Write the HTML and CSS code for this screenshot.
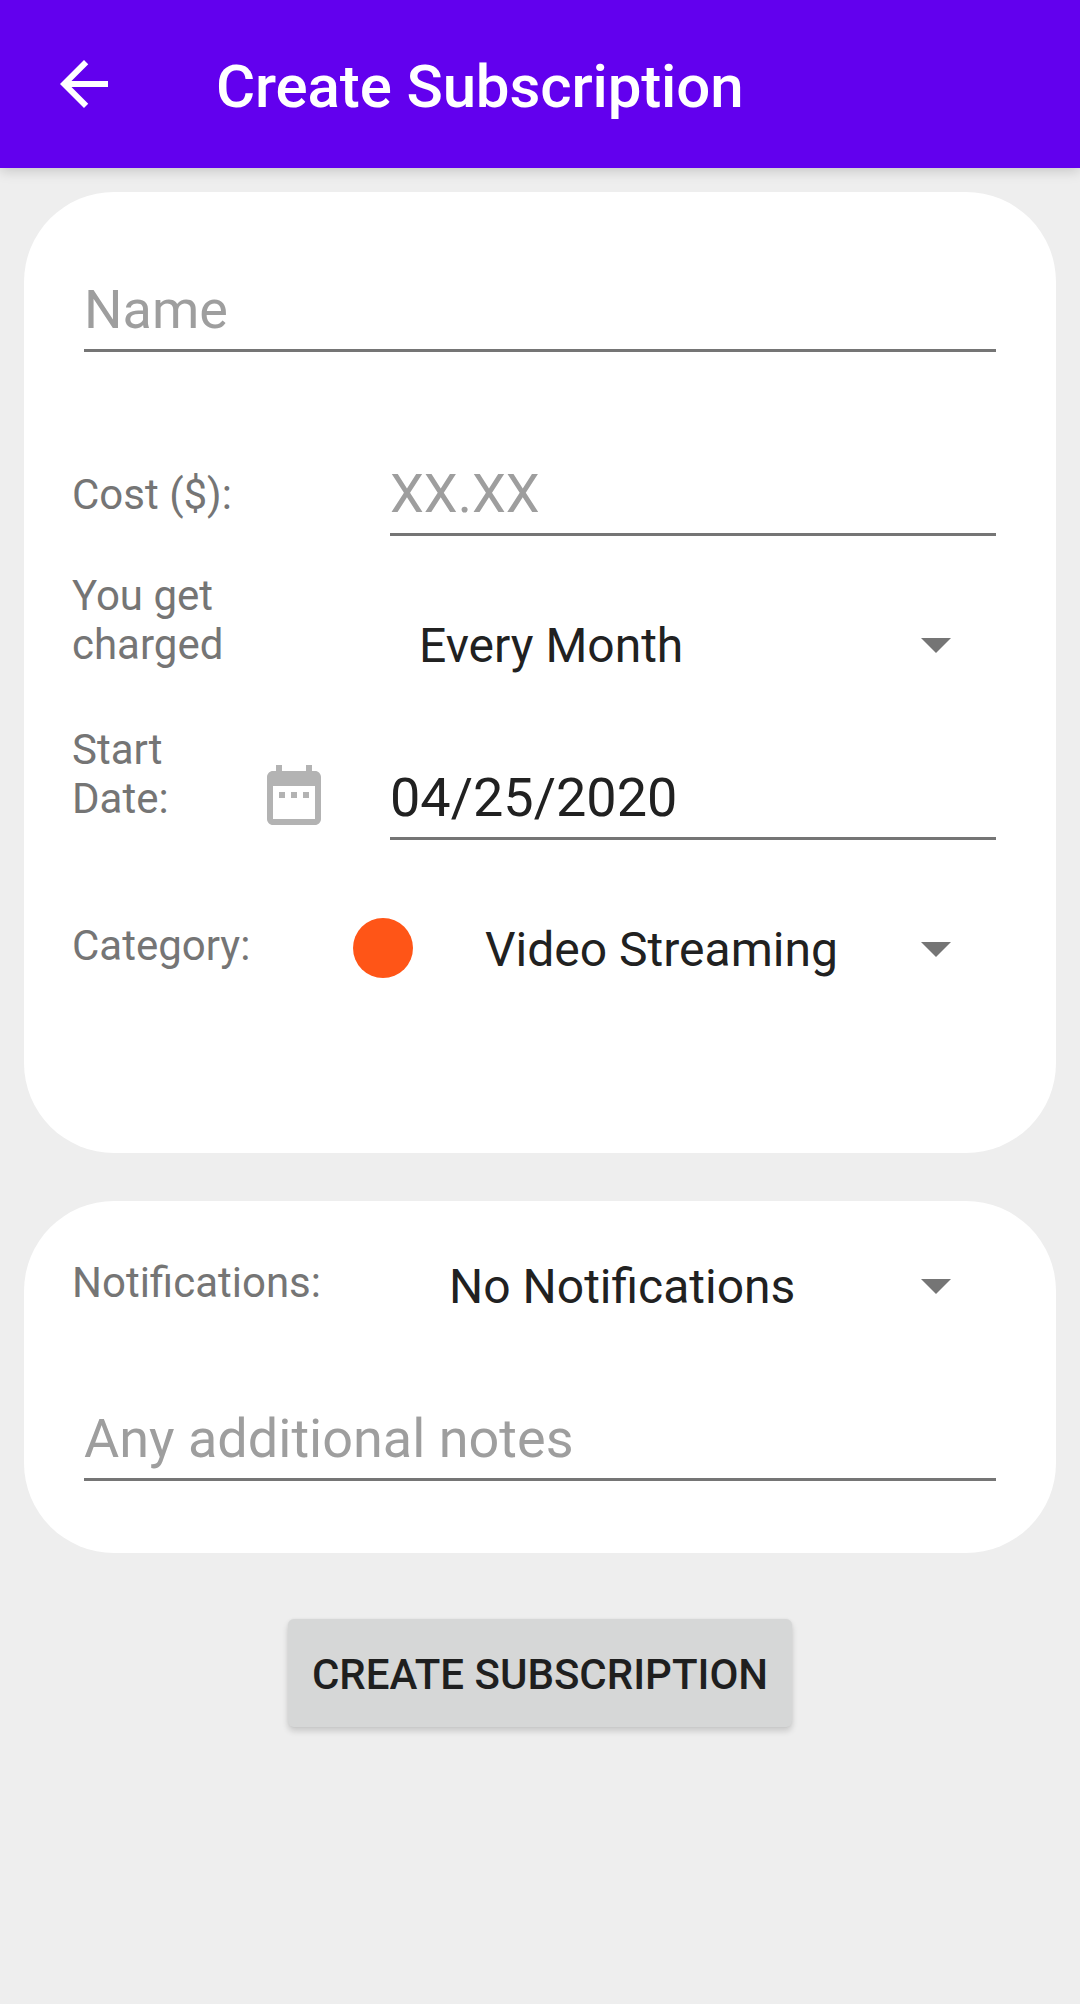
FILE: index.html
```html
<!DOCTYPE html>
<html lang="en">
<head>
<meta charset="utf-8">
<title>Create Subscription</title>
<link rel="stylesheet" href="styles.css">
</head>
<body>
<header class="app-bar">
  <svg class="icon" viewBox="0 0 24 24"><path fill="#fff" d="M20 11H7.83l5.59-5.59L12 4l-8 8 8 8 1.41-1.41L7.83 13H20v-2z"/></svg>
  <h1 class="title">Create Subscription</h1>
</header>
<main class="form">
  <section class="card card-details">
    <div class="field field-wide hint">Name</div>
    <div class="row row-cost">
      <div class="label">Cost ($):</div>
      <div class="field hint">XX.XX</div>
    </div>
    <div class="row row-period">
      <div class="label">You get charged</div>
      <div class="spinner">Every Month<svg class="caret" viewBox="0 0 30 15"><path d="M0 0h30L15 15z"/></svg></div>
    </div>
    <div class="row row-date">
      <div class="label">Start Date:</div>
      <svg class="icon calendar" viewBox="0 0 24 24"><path d="M9 11H7v2h2v-2zm4 0h-2v2h2v-2zm4 0h-2v2h2v-2zm2-7h-1V2h-2v2H8V2H6v2H5c-1.11 0-1.99.9-1.99 2L3 20c0 1.1.89 2 2 2h14c1.1 0 2-.9 2-2V6c0-1.1-.9-2-2-2zm0 16H5V9h14v11z"/></svg>
      <div class="field">04/25/2020</div>
    </div>
    <div class="row row-category">
      <div class="label">Category:</div>
      <span class="dot"></span>
      <div class="spinner">Video Streaming<svg class="caret" viewBox="0 0 30 15"><path d="M0 0h30L15 15z"/></svg></div>
    </div>
  </section>
  <section class="card card-extra">
    <div class="row row-notify">
      <div class="label">Notifications:</div>
      <div class="spinner">No Notifications<svg class="caret" viewBox="0 0 30 15"><path d="M0 0h30L15 15z"/></svg></div>
    </div>
    <div class="field field-wide field-notes hint">Any additional notes</div>
  </section>
  <button class="submit" type="button">CREATE SUBSCRIPTION</button>
</main>
</body>
</html>
```
FILE: styles.css
```css
* { box-sizing: border-box; }
body {
  margin: 0;
  min-height: 2004px;
  background: #eee;
  color: #212121;
  font-family: Roboto, sans-serif;
}
.app-bar {
  display: flex;
  align-items: center;
  gap: 96px;
  height: 168px;
  padding-left: 48px;
  background: #6200ee;
  box-shadow: 0 3px 12px rgba(0, 0, 0, .17);
}
.icon { width: 72px; height: 72px; flex: none; }
.title {
  margin: 0;
  padding-top: 6px;
  color: #fff;
  font-size: 60px;
  font-weight: 500;
  letter-spacing: -.13px;
  line-height: 70px;
}
.form {
  display: flex;
  flex-direction: column;
  align-items: center;
  padding: 24px;
}
.card {
  width: 100%;
  padding: 0 60px 0 48px;
  border-radius: 90px;
  background: #fff;
}
.card-details { height: 961px; padding-top: 81px; }
.card-extra { height: 352px; margin-top: 48px; padding-top: 57px; }
.row { display: flex; align-items: flex-start; }
.label {
  width: 162px;
  flex: none;
  color: #757575;
  font-size: 42px;
  line-height: 49px;
}
.field {
  flex: 1;
  height: 79px;
  border-bottom: 3px solid #757575;
  font-size: 54px;
  line-height: 74px;
}
.field-wide { margin-left: 12px; }
.hint { color: #9e9e9e; }
.spinner {
  display: flex;
  flex: 1;
  align-items: center;
  justify-content: space-between;
  padding-right: 45px;
  font-size: 48px;
  line-height: 56px;
}
.caret { width: 30px; height: 15px; margin-bottom: 2px; fill: #757575; }
.row-cost { margin-top: 105px; }
.row-cost .label { width: 318px; padding-top: 13px; }
.row-period { height: 98px; margin-top: 35px; }
.row-period .label { margin-right: 185px; }
.row-period .spinner { margin-top: 47px; }
.row-date { margin-top: 56px; }
.row-date .calendar { margin: 34px 60px 0 24px; fill: #b3b3b3; }
.row-date .field { margin-top: 36px; }
.row-category { margin-top: 78px; }
.row-category .label { width: 281px; padding-top: 3px; }
.row-category .spinner { margin: 4px 0 0 72px; }
.dot {
  width: 60px;
  height: 60px;
  border-radius: 50%;
  background: #ff5517;
}
.row-notify .label { width: 377px; }
.row-notify .spinner { margin-top: 1px; }
.field-notes { margin-top: 87px; }
.submit {
  width: 504px;
  height: 108px;
  margin-top: 66px;
  padding: 2px 0 0;
  border: 0;
  border-radius: 6px;
  background: #d6d7d7;
  box-shadow: 0 4px 6px rgba(0, 0, 0, .16), 0 0 3px rgba(0, 0, 0, .05);
  color: #1f1f1f;
  font: 500 42px/49px Roboto, sans-serif;
}
```
